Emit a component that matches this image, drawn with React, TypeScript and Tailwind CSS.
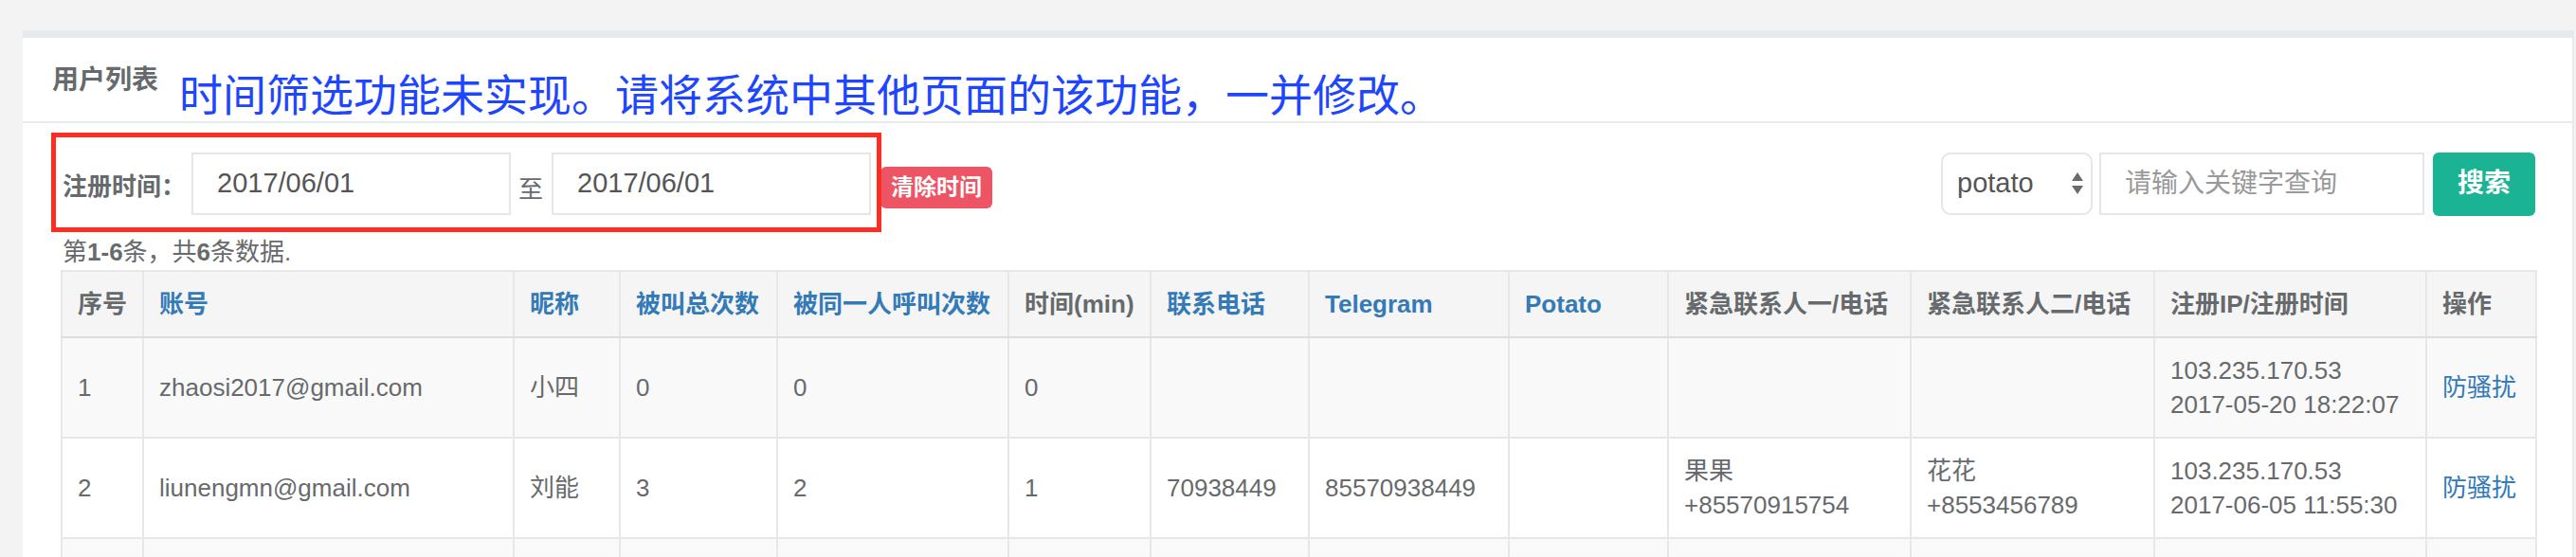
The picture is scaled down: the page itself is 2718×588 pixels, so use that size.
import React from "react";

const columns = [
  { label: "序号", w: 86, link: false },
  { label: "账号", w: 391, link: true },
  { label: "昵称", w: 112, link: true },
  { label: "被叫总次数", w: 166, link: true },
  { label: "被同一人呼叫次数", w: 244, link: true },
  { label: "时间(min)", w: 150, link: false },
  { label: "联系电话", w: 167, link: true },
  { label: "Telegram", w: 211, link: true },
  { label: "Potato", w: 168, link: true },
  { label: "紧急联系人一/电话", w: 256, link: false },
  { label: "紧急联系人二/电话", w: 257, link: false },
  { label: "注册IP/注册时间", w: 287, link: false },
  { label: "操作", w: 116, link: false }
];

const rows: string[][][] = [
  [
    ["1"],
    ["zhaosi2017@gmail.com"],
    ["小四"],
    ["0"],
    ["0"],
    ["0"],
    [],
    [],
    [],
    [],
    [],
    ["103.235.170.53", "2017-05-20 18:22:07"]
  ],
  [
    ["2"],
    ["liunengmn@gmail.com"],
    ["刘能"],
    ["3"],
    ["2"],
    ["1"],
    ["70938449"],
    ["85570938449"],
    [],
    ["果果", "+85570915754"],
    ["花花", "+8553456789"],
    ["103.235.170.53", "2017-06-05 11:55:30"]
  ]
];

function SelectArrows() {
  return (
    <svg width="14" height="26" viewBox="0 0 14 26" className="shrink-0">
      <path d="M7 1 L13 10 L1 10 Z" fill="#6b6b6b" />
      <path d="M1 15 L13 15 L7 24 Z" fill="#6b6b6b" />
    </svg>
  );
}

export default function App() {
  return (
    <div className="min-h-screen bg-[#f3f3f4] pl-[24px] pt-[32px] pr-[2px] font-['Liberation_Sans','Noto_Sans_CJK_SC',sans-serif] text-[#676a6c]">
      <div className="bg-white border-t-[8px] border-t-[#e7eaec] border-r-2 border-r-[#e7eaec] pb-[40px]">
        {/* Title */}
        <div className="h-[90px] border-b-2 border-[#e7eaec] pl-[31px] flex items-start">
          <h5 className="mt-[31px] text-[28px] font-bold leading-none text-[#676a6c]">用户列表</h5>
          <span className="mt-[38px] ml-[22px] text-[46px] leading-none text-[#1f46ff]">
            时间筛选功能未实现。请将系统中其他页面的该功能，一并修改。
          </span>
        </div>

        {/* Content */}
        <div className="pl-[40px] pr-[39px] pt-[31px]">
          {/* Filter row */}
          <div className="relative flex items-center justify-between h-[66px]">
            <div className="flex items-center h-full">
              <span className="ml-[2px] mt-[6px] text-[26px] font-bold leading-none whitespace-nowrap">注册时间：</span>
              <div className="ml-[6px] w-[337px] h-[66px] border-2 border-[#e5e6e7] pl-[25px] flex items-center text-[29px] text-[#555555]">
                2017/06/01
              </div>
              <span className="ml-[8px] mt-[12px] text-[26px] leading-none">至</span>
              <div className="ml-[9px] w-[337px] h-[66px] border-2 border-[#e5e6e7] pl-[25px] flex items-center text-[29px] text-[#555555]">
                2017/06/01
              </div>
              <span className="ml-[10px] mt-[8px] w-[118px] h-[44px] rounded-[6px] bg-[#ed5565] text-white text-[24px] font-bold flex items-center justify-center leading-none">
                清除时间
              </span>
            </div>

            <div className="flex items-center h-full">
              <div className="w-[160px] h-[66px] border-2 border-[#e5e6e7] rounded-[10px] pl-[15px] pr-[7px] flex items-center justify-between text-[29px] text-[#555555]">
                <span>potato</span>
                <SelectArrows />
              </div>
              <div className="ml-[7px] w-[343px] h-[66px] border-2 border-[#e5e6e7] pl-[25px] flex items-center text-[28px] text-[#999999]">
                请输入关键字查询
              </div>
              <button className="ml-[9px] w-[108px] h-[67px] rounded-[6px] bg-[#1ab394] text-white text-[28px] font-bold">
                搜索
              </button>
            </div>

            {/* annotation box */}
            <div className="absolute left-[-10px] top-[-21px] w-[876px] h-[105px] border-[5px] border-[#ff2d21] pointer-events-none" />
          </div>

          {/* Summary */}
          <div className="mt-[21px] text-[26px] leading-[37px] ml-[2px]">
            第<b>1-6</b>条，共<b>6</b>条数据.
          </div>

          {/* Table */}
          <table className="table-fixed border-collapse w-[2611px] text-[26px] leading-[36px]">
            <colgroup>
              {columns.map((c) => (
                <col key={c.label} style={{ width: c.w }} />
              ))}
            </colgroup>
            <thead>
              <tr className="bg-[#f5f5f5]">
                {columns.map((c) => (
                  <th
                    key={c.label}
                    className={`border-2 border-[#e7e7e7] border-b-[#dddddd] px-[16px] py-[16px] text-left font-bold whitespace-nowrap ${
                      c.link ? "text-[#337ab7]" : "text-[#676a6c]"
                    }`}
                  >
                    {c.label}
                  </th>
                ))}
              </tr>
            </thead>
            <tbody>
              {rows.map((r, i) => (
                <tr key={i} className={i % 2 === 0 ? "bg-[#f9f9f9]" : "bg-white"}>
                  {r.map((cell, j) => (
                    <td key={j} className="border-2 border-[#e7e7e7] px-[16px] py-[16px] align-middle whitespace-nowrap">
                      {cell.map((line, k) => (
                        <div key={k}>{line}</div>
                      ))}
                    </td>
                  ))}
                  <td className="border-2 border-[#e7e7e7] px-[16px] py-[16px] align-middle text-[#337ab7]">防骚扰</td>
                </tr>
              ))}
              <tr className="bg-[#f9f9f9]">
                {columns.map((c) => (
                  <td key={c.label} className="border-2 border-[#e7e7e7] px-[16px] py-[16px] h-[104px]">
                    &nbsp;
                  </td>
                ))}
              </tr>
            </tbody>
          </table>
        </div>
      </div>
    </div>
  );
}
